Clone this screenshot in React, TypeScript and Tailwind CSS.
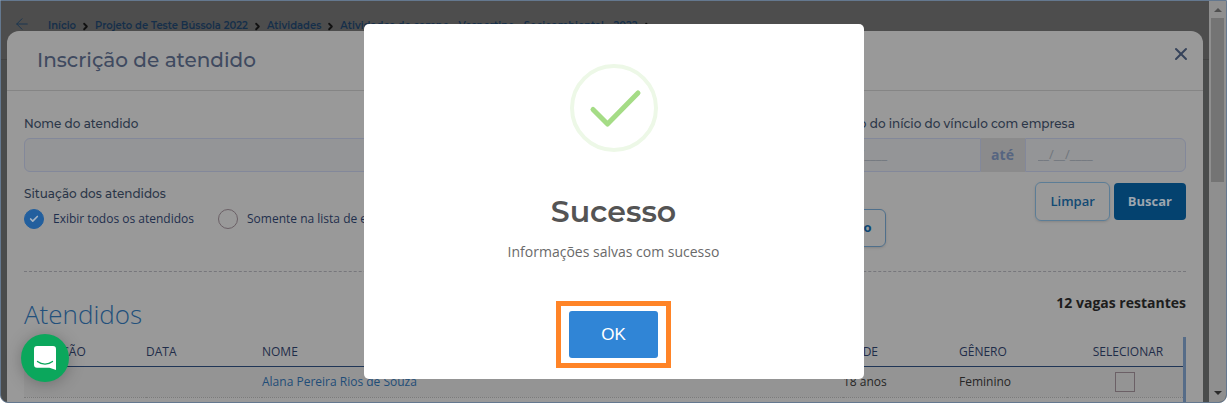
import { ArrowLeft, Check, ChevronRight, X } from "lucide-react";

const crumbs = [
  "Início",
  "Projeto de Teste Bússola 2022",
  "Atividades",
  "Atividades de campo - Vespertino - Socioambiental - 2022",
];

const rows = [
  {
    inscricao: "",
    data: "",
    nome: "Alana Pereira Rios de Souza",
    idade: "18 anos",
    genero: "Feminino",
  },
];

function Breadcrumb() {
  return (
    <header className="flex h-[59px] items-start border-b border-[#434343] pt-[14px] pl-3">
      <a href="#voltar" aria-label="Voltar" className="mr-[17px] text-[#1b3550]">
        <ArrowLeft size={18} strokeWidth={1.3} />
      </a>
      <nav className="flex items-center pt-px font-['Montserrat','Inter',sans-serif] text-[10px] leading-5 font-semibold text-[#152f4a]">
        {crumbs.map((crumb) => (
          <span key={crumb} className="flex items-center whitespace-nowrap">
            <a href="#">{crumb}</a>
            <ChevronRight size={11} strokeWidth={4} className="mx-1 text-[#111]" />
          </span>
        ))}
      </nav>
    </header>
  );
}

function RadioOption({ label, checked }: { label: string; checked?: boolean }) {
  return (
    <label className="flex items-center gap-[9px] whitespace-nowrap text-[#1f2f4d]">
      <span className="relative flex size-5 items-center justify-center">
        <input
          type="radio"
          name="situacao"
          defaultChecked={checked}
          className="peer size-5 appearance-none rounded-full border border-[#6b6066] checked:border-[#225f9e] checked:bg-[#225f9e]"
        />
        <Check
          size={10}
          strokeWidth={4}
          className="pointer-events-none absolute hidden text-[#a5b4c4] peer-checked:block"
        />
      </span>
      {label}
    </label>
  );
}

function Filters() {
  return (
    <form className="border-b border-dashed border-[#77777c] pt-6 pb-6 text-xs">
      <div className="flex gap-6">
        <div className="flex-1">
          <label
            htmlFor="nome"
            className="block pb-[5px] font-['Montserrat','Inter',sans-serif] leading-[18px] font-medium text-[#2b3648]"
          >
            Nome do atendido
          </label>
          <input
            id="nome"
            type="text"
            className="h-[34px] w-full rounded-md border border-[#83889a] bg-[#949597] px-3"
          />
        </div>
        <div className="w-[367px]">
          <label
            htmlFor="inicio"
            className="block pb-[5px] font-['Montserrat','Inter',sans-serif] leading-[18px] font-medium text-[#2b3648]"
          >
            Período do início do vínculo com empresa
          </label>
          <div className="flex h-[34px] text-[13px]">
            <input
              id="inicio"
              type="text"
              placeholder="__/__/____"
              className="w-0 flex-1 rounded-l-md border border-[#83889a] bg-[#949597] px-3 placeholder:text-[#70757d]"
            />
            <span className="flex w-11 items-center justify-center bg-[#8b8b8c] text-sm font-bold text-[#566581]">
              até
            </span>
            <input
              type="text"
              aria-label="Data final"
              placeholder="__/__/____"
              className="w-0 flex-1 rounded-r-md border border-[#83889a] bg-[#949597] px-3 placeholder:text-[#70757d]"
            />
          </div>
        </div>
      </div>

      <div className="flex items-start pt-[10px]">
        <fieldset className="mt-[3px] flex-1">
          <legend className="font-['Montserrat','Inter',sans-serif] leading-[18px] font-medium text-[#2b3648]">
            Situação dos atendidos
          </legend>
          <div className="flex gap-6 pt-1.5">
            <RadioOption label="Exibir todos os atendidos" checked />
            <RadioOption label="Somente na lista de espera" />
          </div>
        </fieldset>
        <button
          type="button"
          className="mt-[27px] mr-[149px] h-[38px] rounded-md border border-[#4f6f8b] px-3.5 text-[13px] font-bold text-[#0d4673] shadow-sm"
        >
          Exportação
        </button>
        <div className="flex items-center gap-1 text-[13px]">
          <button
            type="reset"
            className="h-[39px] rounded-md border border-[#5c7d96] px-3.5 font-semibold text-[#124a74] shadow-sm"
          >
            Limpar
          </button>
          <button
            type="button"
            className="h-[37px] rounded-sm bg-[#04426f] px-3.5 font-bold text-[#9da6af]"
          >
            Buscar
          </button>
        </div>
      </div>
    </form>
  );
}

function AttendeeTable() {
  return (
    <section>
      <div className="flex items-start justify-between pt-[21px] pb-[7px]">
        <h3 className="pt-[5px] text-[26px] leading-8 font-light text-[#22507c]">
          Atendidos
        </h3>
        <p className="text-sm font-bold text-[#1d1d1d]">12 vagas restantes</p>
      </div>
      <div className="border-r-3 border-[#566c88]">
        <table className="w-full table-fixed text-left text-xs text-[#262626]">
          <thead>
            <tr className="h-[29px] border-b border-[#1f3556] text-[#1f2d49]">
              <th className="w-[122px] pt-0.5 font-medium">INSCRIÇÃO</th>
              <th className="w-[116px] pt-0.5 font-medium">DATA</th>
              <th className="pt-0.5 font-medium">NOME</th>
              <th className="w-[116px] pt-0.5 font-medium">IDADE</th>
              <th className="w-[108px] pt-0.5 font-medium">GÊNERO</th>
              <th className="w-[116px] pt-0.5 pl-1.5 text-center font-medium">SELECIONAR</th>
            </tr>
          </thead>
          <tbody>
            {rows.map((row) => (
              <tr
                key={row.nome}
                className="h-[31px] border-b border-dotted border-[#7b7b7b] bg-[#949494]"
              >
                <td>{row.inscricao}</td>
                <td>{row.data}</td>
                <td>
                  <a href="#" className="text-[#1f4d78]">
                    {row.nome}
                  </a>
                </td>
                <td>{row.idade}</td>
                <td>{row.genero}</td>
                <td className="text-center">
                  <input
                    type="checkbox"
                    aria-label={`Selecionar ${row.nome}`}
                    className="size-5 appearance-none border border-[#6b6066] align-middle"
                  />
                </td>
              </tr>
            ))}
          </tbody>
        </table>
        <div className="h-10" />
      </div>
    </section>
  );
}

function SuccessDialog() {
  return (
    <div className="absolute inset-0 flex items-center justify-center">
      <div
        role="dialog"
        aria-labelledby="sucesso"
        className="flex w-[500px] flex-col items-center rounded-[5px] bg-white pt-10 pb-[11px] text-[#545454]"
      >
        <svg width="88" height="88" viewBox="0 0 88 88" fill="none">
          <circle cx="44" cy="44" r="42" stroke="#edf8e7" strokeWidth="4" />
          <path
            d="M23 45.5 37.5 60 68 29"
            stroke="#a5dc86"
            strokeWidth="5"
            strokeLinecap="round"
            strokeLinejoin="round"
          />
        </svg>
        <h2
          id="sucesso"
          className="pt-10 font-['Montserrat','Inter',sans-serif] text-[30px] leading-10 font-semibold"
        >
          Sucesso
        </h2>
        <p className="pt-2.5 text-sm text-[#6a6a6a]">Informações salvas com sucesso</p>
        <div className="mt-[39px] border-5 border-[#ff8427] px-2 py-[5px]">
          <button
            type="button"
            className="h-[47px] rounded-[3px] bg-[#3085d6] px-8 font-['Liberation_Sans',Arial,sans-serif] text-[17px] text-white"
          >
            OK
          </button>
        </div>
      </div>
    </div>
  );
}

function ChatLauncher() {
  return (
    <button
      type="button"
      aria-label="Abrir chat"
      className="absolute bottom-5 left-5 flex size-12 items-center justify-center rounded-full bg-[#0ba75c] shadow-[0_2px_16px_rgba(0,0,0,0.25)]"
    >
      <svg width="22" height="24" viewBox="0 0 22 24" fill="none">
        <path
          d="M3 0h16a3 3 0 0 1 3 3v21l-6.500-2.300H3a3 3 0 0 1-3-3V3a3 3 0 0 1 3-3Z"
          fill="#fff"
        />
        <path
          d="M3.500 15.500c4.400 3.500 10.600 3.500 15 0"
          stroke="#0ba75c"
          strokeWidth="1.300"
          strokeLinecap="round"
        />
      </svg>
    </button>
  );
}

function Scrollbar() {
  return (
    <div className="flex w-[17px] flex-col items-center justify-between bg-[#8f8f8f] pt-[7px] pb-[7px]">
      <div className="flex h-[45%] w-full flex-col items-center gap-1.5">
        <svg width="8" height="4" viewBox="0 0 8 4" className="shrink-0">
          <path d="M4 0 8 4H0Z" fill="#505050" />
        </svg>
        <div className="w-[13px] flex-1 bg-[#747474]" />
      </div>
      <svg width="8" height="4" viewBox="0 0 8 4">
        <path d="M0 0h8L4 4Z" fill="#2b2b2b" />
      </svg>
    </div>
  );
}

export default function App() {
  return (
    <div className="relative flex h-screen overflow-hidden rounded-b-lg border border-[#64788f] bg-[#4a4c4c] font-['Open_Sans',sans-serif]">
      <div className="relative min-w-0 flex-1 overflow-hidden">
        <div className="bg-[#4d4d4d]">
          <Breadcrumb />
        </div>

        {/* modal de inscrição */}
        <div className="absolute inset-x-1.5 top-[30px] bottom-0 overflow-hidden rounded-t-xl bg-[#999]">
          <div className="flex h-[60px] items-start justify-between border-b border-[#858585] pr-3 pl-[30px]">
            <h1 className="pt-[13px] font-['Montserrat','Inter',sans-serif] text-xl leading-8 font-medium text-[#3f4a60]">
              Inscrição de atendido
            </h1>
            <button type="button" aria-label="Fechar" className="pt-[13px] text-[#36435a]">
              <X size={20} strokeWidth={2.4} />
            </button>
          </div>
          <div className="px-[17px]">
            <Filters />
            <AttendeeTable />
          </div>
        </div>
      </div>
      <Scrollbar />
      <SuccessDialog />
      <ChatLauncher />
    </div>
  );
}
